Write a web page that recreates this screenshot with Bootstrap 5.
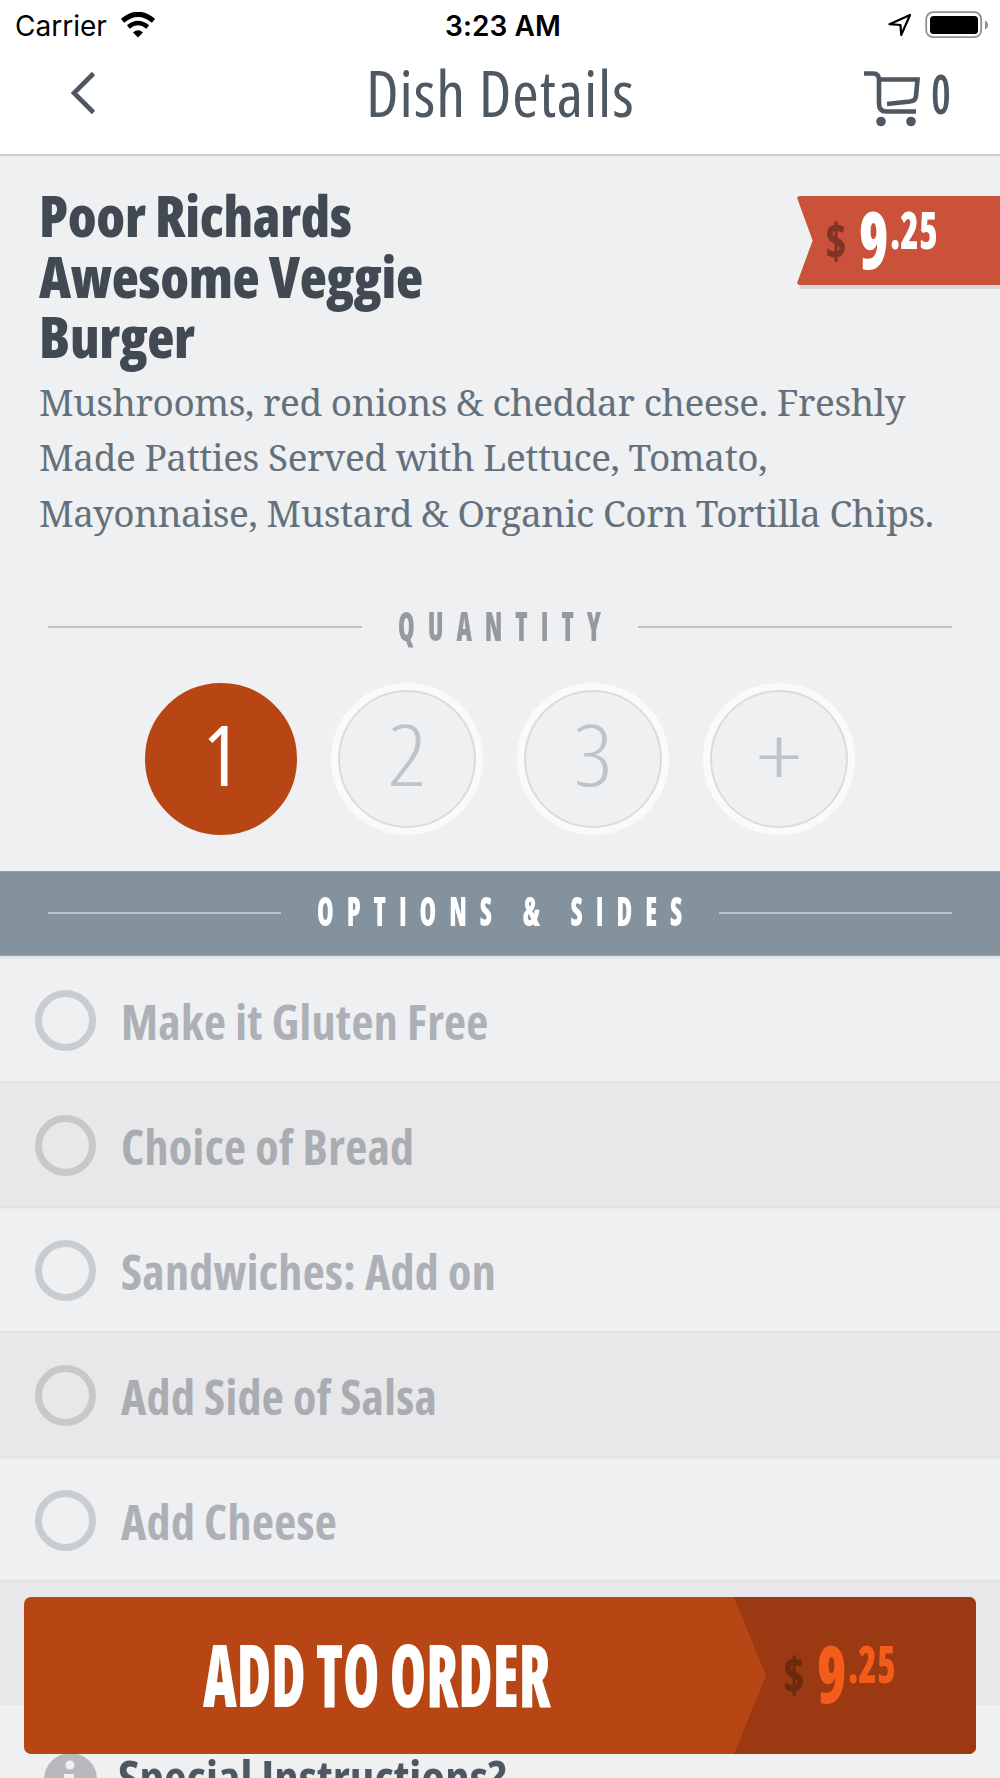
<!DOCTYPE html>
<html lang="en">
<head>
<meta charset="utf-8">
<meta name="viewport" content="width=device-width, initial-scale=1">
<title>Dish Details</title>
<link href="https://cdn.jsdelivr.net/npm/bootstrap@5.3.0/dist/css/bootstrap.min.css" rel="stylesheet">
<style>
:root{--slate:#4d5862;--rust:#b84614;--page:#eef0f2}
html,body{height:1778px;overflow:hidden}
body{background:var(--page);font-family:"Open Sans","Noto Sans",sans-serif;font-stretch:75%;color:var(--slate)}
button{font-stretch:inherit}
.screen{width:1000px;height:1778px}
.squeeze{display:block;white-space:nowrap;line-height:1;transform-origin:0 50%}
.statusbar{height:52px;font:400 28px/52px Inter,"Liberation Sans",sans-serif;color:#000;padding:0 11px 0 15px}
.statusbar .carrier{width:430px}
.statusbar .wifi{margin-left:14px;margin-top:-3px}
.statusbar .clock{font-weight:600;letter-spacing:.1px}
.statusbar .battery{margin-left:13px;margin-top:-3px}
.statusbar .locate{margin-top:-2px}
.titlebar{height:104px;padding-bottom:24px;border-bottom:2px solid #cdcfd1}
.titlebar .back{margin:4px 0 0 69px}
.titlebar h1{font-size:64px;line-height:78px;font-weight:400;letter-spacing:.9px;margin:3px 0 0 267px}
.cart{padding-right:49px;gap:9px}
.cart svg{margin-top:15px}
.cart-count{width:20px;font-size:54px;font-weight:600;padding-top:4px}
.cart-count .squeeze{transform:scaleX(.82)}
.dish{padding:29px 0 0 39px;height:441px}
.dish h2{font-size:56px;line-height:60.5px;font-weight:800;color:#414a52;letter-spacing:-.35px;margin-bottom:7px}
.dish p{font:400 37px/55.9px "Noto Serif","DejaVu Serif Condensed",serif;letter-spacing:-.45px;color:#64717c;white-space:nowrap}
.pricetag{width:203px;height:94px;margin-top:11px;filter:drop-shadow(2px 4px 0 #d5d7d9)}
.pricetag .face{height:89px;background:#ca523b;clip-path:polygon(0 2%,1% 0,100% 0,100% 100%,1% 100%,0 98%,7.7% 50%);padding:2px 0 0 28px;color:#fff;--dollar:#813325}
.price{font-weight:800}
.price .cur{width:34px;font-size:50px;margin-top:17px;color:var(--dollar)}
.price .whole{width:31px;font-size:80px}
.price .cents{font-size:51px;margin-top:6px}
.price .squeeze{transform:scaleX(.74)}
.price .cur .squeeze{transform:scaleX(.88)}
.rule-line{height:2px;background:#bfc1c3}
.caption-row{padding:0 48px}
.caption-row .squeeze{font-size:41px;font-weight:800;letter-spacing:19.8px;margin-top:-4px;transform:scaleX(.655)}
.qty-title{height:60px;color:#96999d}
.qty-title .label{width:276px;padding-left:36px}
.qty-list{gap:34px;padding:26px 0 36px 145px}
.qty{width:152px;height:152px;border-radius:50%;border:7px solid #fafafa;font-size:84px;font-weight:300;color:#bdc5cb;background:var(--page);box-shadow:inset 0 0 0 2px #d9dbdc;padding:0 0 11px;line-height:1}
.qty span{display:block;transform:scaleX(1.14)}
.qty .plus{padding-top:3px;transform:scaleX(1.32)}
.qty.active{background:var(--rust);border-color:var(--rust);box-shadow:none;color:#fff;font-weight:400}
.qty.active span{transform:none}
.options-title{height:85px;padding-bottom:2px;background:#84929d;color:#fff;border-top:1px solid #97a3ac;border-bottom:1px solid #97a3ac}
.options-title .label{width:438px;padding-left:36px}
.options-title .rule-line{background:#bac4cc}
.option{height:124.9px;padding:4px 0 0 35px;box-shadow:inset 0 2.5px #e2e3e5;background:var(--page);color:#adb0b6;font-size:48px;font-weight:700;line-height:1;gap:25px;letter-spacing:.32px}
.option span{padding-top:4px}
.option:nth-child(even){background:#e8e8ea;color:#a9adb2}
.option:nth-child(even) .ring{border-color:#c6c8ca}
.ring{width:61px;height:61px;border-radius:50%;border:7.5px solid #cacdd0}
.special{padding:48px 0 0 44px;gap:21px;font-size:49px;font-weight:700;line-height:1;white-space:nowrap}
.order-btn{left:24px;top:1597px;width:952px;height:157px;border-radius:7px;background:var(--rust);border:0;overflow:hidden}
.order-btn .cta{width:710px;padding-left:179px;font-size:87px;font-weight:800;color:#fff}
.order-btn .cta .squeeze{transform:scaleX(.675);margin-top:-5px}
.order-btn .sum{width:242px;background:#9b3912;clip-path:polygon(0 0,100% 0,100% 100%,0 100%,13.2% 50%);padding:35px 0 0 49px;color:#f45c1b;--dollar:#6b2a0e}
</style>
</head>
<body>
<div class="screen position-relative overflow-hidden">
  <header class="bg-white">
    <div class="statusbar d-flex align-items-center">
      <div class="carrier d-flex align-items-center"><span>Carrier</span>
        <svg class="wifi" width="34" height="26" viewBox="0 0 34 26" fill="none"><path d="M1.500 8.800Q17-4.200 32.500 8.800" stroke="#000" stroke-width="5"/><path d="M7.300 15Q17 7 26.700 15" stroke="#000" stroke-width="4.400"/><path d="M12 20.500Q17 16 22 20.500L17 25.500Z" fill="#000"/></svg></div>
      <span class="clock">3:23 AM</span>
      <div class="d-flex align-items-center ms-auto">
        <svg class="locate" width="24" height="24" viewBox="0 0 24 24" fill="none" stroke="#000" stroke-width="2.200" stroke-linejoin="round"><path d="M22 2 1.500 11.200 12.500 12 13.200 22Z"/></svg>
        <svg class="battery" width="64" height="28" viewBox="0 0 64 28"><rect x="1.200" y="1.200" width="55" height="25" rx="7" fill="none" stroke="#8f8f8f" stroke-width="1.800"/><rect x="5" y="5" width="48" height="18" rx="3.500"/><path d="M60 9.500Q63 11 63 14T60 18.500Z" fill="#8f8f8f"/></svg>
      </div>
    </div>
    <div class="titlebar d-flex align-items-center">
      <svg class="back" width="30" height="44" viewBox="0 0 30 44" fill="none" stroke="#4d5862" stroke-width="4.600"><path d="M24.500 2.500 5 22 24.500 41.500"/></svg>
      <h1 class="text-nowrap">Dish Details</h1>
      <div class="cart d-flex align-items-center ms-auto">
        <svg width="58" height="58" viewBox="0 0 58 58" fill="none" stroke="#4d5862" stroke-width="4.600"><path d="M0 3.500H9Q15 3.500 15 10V33.500Q15 41.500 22 41.500H52"/><path d="M15 9.500H53.500L52 26Q51.500 31 46 31.500L23 34"/><g fill="#4d5862" stroke="none"><circle cx="17" cy="51.500" r="4.800"/><circle cx="47" cy="51.500" r="4.800"/></g></svg>
        <div class="cart-count"><span class="squeeze">0</span></div>
      </div>
    </div>
  </header>

  <section class="dish">
    <div class="d-flex justify-content-between align-items-start">
      <h2>Poor Richards<br>Awesome Veggie<br>Burger</h2>
      <div class="pricetag"><div class="face"><div class="price d-flex align-items-start">
        <div class="cur"><span class="squeeze">$</span></div><div class="whole"><span class="squeeze">9</span></div><div class="cents"><span class="squeeze">.25</span></div>
      </div></div></div>
    </div>
    <p class="mb-0">Mushrooms, red onions &amp; cheddar cheese. Freshly<br>Made Patties Served with Lettuce, Tomato,<br>Mayonnaise, Mustard &amp; Organic Corn Tortilla Chips.</p>
  </section>

  <section>
    <div class="caption-row qty-title d-flex align-items-center">
      <div class="rule-line flex-fill"></div><div class="label"><span class="squeeze">QUANTITY</span></div><div class="rule-line flex-fill"></div>
    </div>
    <div class="qty-list d-flex">
      <button class="qty active"><span>1</span></button>
      <button class="qty"><span>2</span></button>
      <button class="qty"><span>3</span></button>
      <button class="qty"><span class="plus">+</span></button>
    </div>
  </section>

  <section>
    <div class="caption-row options-title d-flex align-items-center">
      <div class="rule-line flex-fill"></div><div class="label"><span class="squeeze">OPTIONS &amp; SIDES</span></div><div class="rule-line flex-fill"></div>
    </div>
    <div>
      <div class="option d-flex align-items-center"><i class="ring"></i><span>Make it Gluten Free</span></div>
      <div class="option d-flex align-items-center"><i class="ring"></i><span>Choice of Bread</span></div>
      <div class="option d-flex align-items-center"><i class="ring"></i><span>Sandwiches: Add on</span></div>
      <div class="option d-flex align-items-center"><i class="ring"></i><span>Add Side of Salsa</span></div>
      <div class="option d-flex align-items-center"><i class="ring"></i><span>Add Cheese</span></div>
      <div class="option"></div>
    </div>
    <div class="special d-flex">
      <svg width="53" height="53" viewBox="0 0 53 53"><circle cx="26.500" cy="26.500" r="26.500" fill="#b7b9bc"/><circle cx="26" cy="12" r="4.500" fill="#eef0f2"/><path d="M20 21H30V40H20Z" fill="#eef0f2"/></svg>
      <span>Special Instructions?</span>
    </div>
  </section>

  <button class="order-btn position-absolute d-flex p-0 text-start">
    <span class="cta d-flex align-items-center h-100"><span class="squeeze">ADD TO ORDER</span></span>
    <span class="sum h-100 d-block"><span class="price d-flex align-items-start"><span class="cur"><span class="squeeze">$</span></span><span class="whole"><span class="squeeze">9</span></span><span class="cents"><span class="squeeze">.25</span></span></span></span>
  </button>
</div>
<script src="https://cdn.jsdelivr.net/npm/bootstrap@5.3.0/dist/js/bootstrap.bundle.min.js"></script>
</body>
</html>
